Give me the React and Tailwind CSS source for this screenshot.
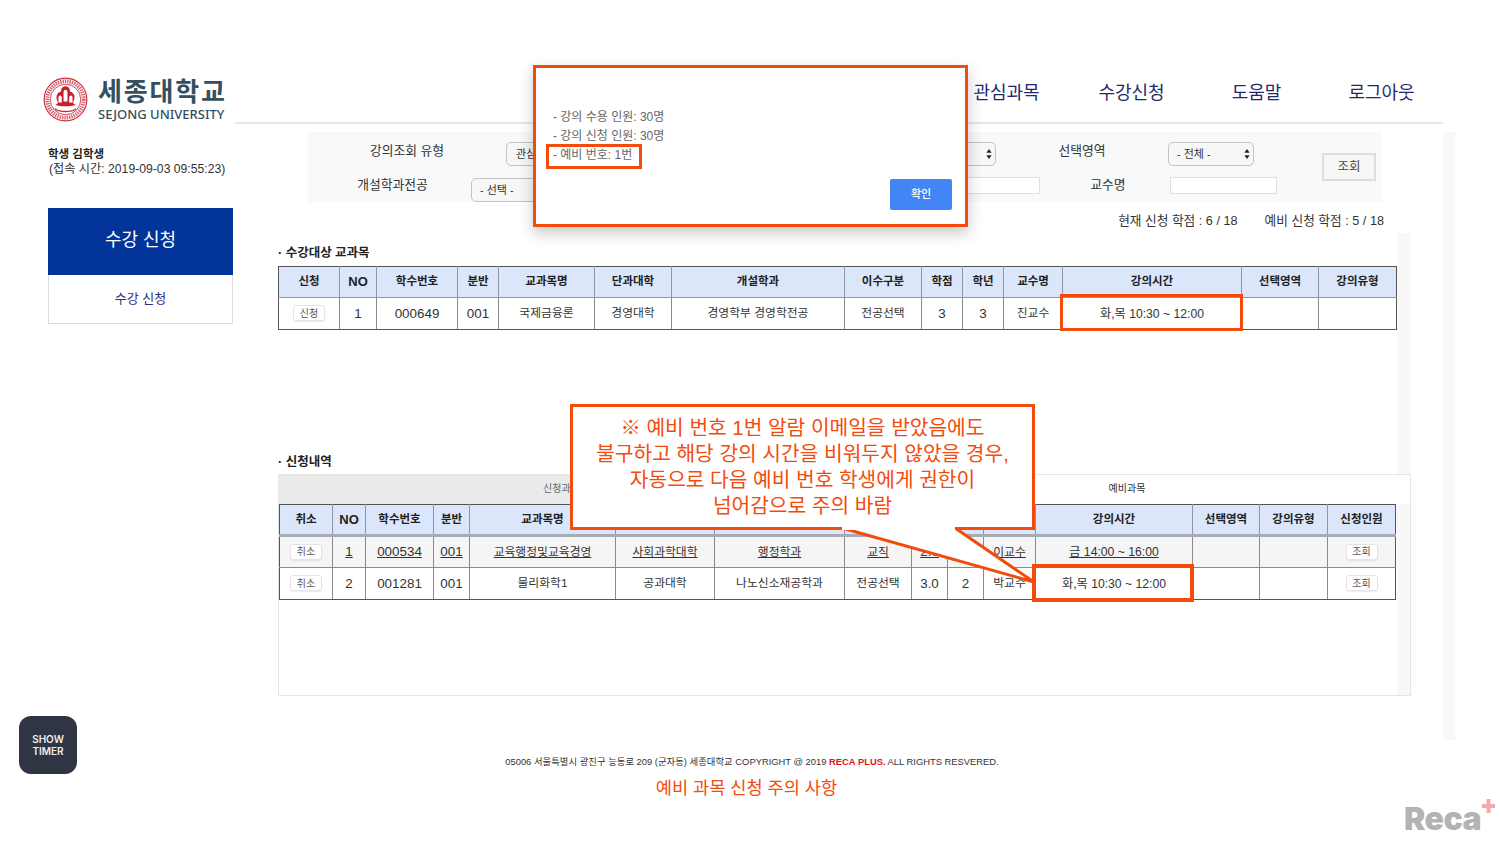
import React from "react";

const upperCols = [61, 37, 81, 41, 96, 77, 173, 77, 41, 41, 59, 179, 77, 78];
const upperHead = ["신청", "NO", "학수번호", "분반", "교과목명", "단과대학", "개설학과", "이수구분", "학점", "학년", "교수명", "강의시간", "선택영역", "강의유형"];
const upperRow = ["1", "000649", "001", "국제금융론", "경영대학", "경영학부 경영학전공", "전공선택", "3", "3", "진교수", "화,목 10:30 ~ 12:00", "", ""];

const lowerCols = [53, 33, 68, 36, 146, 99, 130, 67, 36, 36, 52, 157, 67, 68, 68];
// the middle labels sit behind the callout in the picture, so they stay empty
const lowerHead = ["취소", "NO", "학수번호", "분반", "교과목명", "", "", "", "", "", "", "강의시간", "선택영역", "강의유형", "신청인원"];
const lowerRows = [
  ["1", "000534", "001", "교육행정및교육경영", "사회과학대학", "행정학과", "교직", "2.0", "2", "이교수", "금 14:00 ~ 16:00"],
  ["2", "001281", "001", "물리화학1", "공과대학", "나노신소재공학과", "전공선택", "3.0", "2", "박교수", "화,목 10:30 ~ 12:00"],
];

const tableEdges =
  "[&_tr:last-child_td]:border-b-[#555] [&_th]:border-t-[#555] [&_tr>*:first-child]:border-l-[#555] [&_tr>*:last-child]:border-r-[#555]";

// digits read a little larger than the hangul in these tables
const cellSize = (text) => {
  if (/^[\d.]+$/.test(text)) return "text-[13.4px]";
  if (/\d+:\d+/.test(text)) return "text-[12.2px]";
  return "text-[11.8px]";
};

const SelectArrow = () => (
  <svg width="6" height="10" viewBox="0 0 6 10" className="shrink-0">
    <path d="M3 0L5.6 3.8H.4z M3 10L.4 6.2H5.6z" fill="#222" />
  </svg>
);

const SmallBtn = ({ children }) => (
  <span className="inline-flex align-middle mb-[2px] w-[32px] h-[16px] items-center justify-center rounded-[3px] border border-[#e4e4e4] bg-white text-[10px] text-[#555] shadow-[0_1px_1px_rgba(0,0,0,0.08)]">
    {children}
  </span>
);

const Seal = () => (
  <svg width="45" height="45" viewBox="0 0 46 46" className="shrink-0">
    <circle cx="23" cy="23" r="21.8" fill="#fff" stroke="#c9303c" strokeWidth="1.2" />
    <circle cx="23" cy="23" r="18.6" fill="none" stroke="#d9606a" strokeWidth="4" strokeDasharray="1.4 1" />
    <circle cx="23" cy="23" r="15.6" fill="#fff" stroke="#c9303c" strokeWidth="0.9" />
    <path
      d="M23 9.5c3.2 0 4.6 2.6 4.6 5.2 2.8.6 4.6 3 4.6 6 0 2.2-.6 3.6-1.6 5.2.6 1.6 1.6 2.4 3 2.8-2.6 1-7 1.2-10.6 1.2s-8-.2-10.6-1.2c1.4-.4 2.4-1.2 3-2.8-1-1.6-1.6-3-1.6-5.2 0-3 1.8-5.4 4.6-6 0-2.6 1.4-5.2 4.6-5.2z"
      fill="#c9202f"
    />
    <path d="M23 13c1.3 0 2 1.3 2 3v9h-4v-9c0-1.7.7-3 2-3z" fill="#fff" />
    <path d="M17.4 19c1.2 0 1.8 1 1.8 2.4V26h-3.4v-4.6c0-1.4.5-2.4 1.6-2.4zM28.6 19c1.1 0 1.6 1 1.6 2.4V26h-3.4v-4.6c0-1.4.6-2.4 1.8-2.4z" fill="#fff" />
    <path d="M12 32.5c3 2 7 2.8 11 2.8s8-.8 11-2.8" fill="none" stroke="#c9303c" strokeWidth="1.4" />
  </svg>
);

const Sidebar = () => (
  <aside className="w-[235px] shrink-0 pl-[48px]">
    <div className="flex items-start -ml-[5px] mt-[77px] h-[45px] gap-[10px]">
      <Seal />
      <div className="flex flex-col text-[#34505f]">
        <span className="mt-[1px] text-[26px] leading-[29px] font-semibold tracking-[1.8px] whitespace-nowrap">세종대학교</span>
        <span className="text-[13px] leading-[14px] font-medium whitespace-nowrap font-['Noto_Sans']">SEJONG UNIVERSITY</span>
      </div>
    </div>
    <p className="mt-[25px] text-[11.5px] leading-[15px] font-bold text-[#222]">학생 김학생</p>
    <p className="pl-[1px] text-[12.2px] leading-[15px] text-[#333] whitespace-nowrap">(접속 시간: 2019-09-03 09:55:23)</p>
    <div className="mt-[31px] w-[185px] h-[67px] pb-[2px] bg-[#02349a] text-white text-[18px] flex items-center justify-center">
      수강 신청
    </div>
    <div className="w-[185px] h-[49px] border border-t-0 border-[#dcdcdc] text-[13px] text-[#2b2f7f] flex items-center justify-center">
      수강 신청
    </div>
  </aside>
);

const Header = () => (
  <header className="h-[124px] border-b-2 border-[#e6e6e6] flex justify-end items-start pt-[78px] text-[18px] leading-[30px] text-[#1f2a6b]">
    {["관심과목", "수강신청", "도움말", "로그아웃"].map((item) => (
      <a key={item} className="w-[125px] text-center translate-x-[1px]">{item}</a>
    ))}
  </header>
);

const FilterPanel = () => (
  <div className="ml-[73px] mt-[8px] w-[1074px] h-[70px] bg-[#f8f9fb] flex text-[12.8px] text-[#333]">
    <div className="w-[1014px] shrink-0">
      <div className="flex items-start pt-[10px] h-[46px]">
        <label className="w-[198px] pt-[1px] text-center leading-[16px]">강의조회 유형</label>
        <div className="w-[490px] h-[24px] rounded-[5px] border border-[#c4c4c4] bg-[#f7f7f7] flex items-center justify-between pl-[9px] pr-[3px] text-[11px]">
          관심과목
          <SelectArrow />
        </div>
        <label className="w-[172px] pt-[1px] text-center leading-[16px]">선택영역</label>
        <div className="w-[86px] h-[24px] rounded-[5px] border border-[#c4c4c4] bg-[#f7f7f7] flex items-center justify-between pl-[8px] pr-[3px] text-[11px]">
          - 전체 -
          <SelectArrow />
        </div>
      </div>
      <div className="flex items-start">
        <label className="w-[163px] pl-[6px] -mt-[1px] text-center leading-[16px]">개설학과전공</label>
        <div className="w-[80px] h-[24px] rounded-[5px] border border-[#c4c4c4] bg-[#f7f7f7] flex items-center pl-[8px] text-[11px]">
          - 선택 -
        </div>
        <div className="ml-[289px] -mt-[1px] w-[200px] h-[17px] border border-[#e0e0e0] bg-white" />
        <label className="w-[130px] pl-[6px] -mt-[1px] text-center leading-[16px]">교수명</label>
        <div className="-mt-[1px] w-[107px] h-[17px] border border-[#e0e0e0] bg-white" />
      </div>
    </div>
    <button className="mt-[21px] w-[54px] h-[28px] border-2 border-[#dedede] bg-[#f7f7f7] text-[12.5px] text-[#444]">조회</button>
  </div>
);

const CreditSummary = () => (
  <div className="h-[31px] pr-[59px] pt-[11px] flex justify-end items-start gap-[27px] text-[12.7px] leading-[16px] text-[#333] whitespace-nowrap">
    <span>현재 신청 학점 : 6 / 18</span>
    <span>예비 신청 학점 : 5 / 18</span>
  </div>
);

const HeadCell = ({ label, className }) => (
  <th className={`border-x border-[#8f96a3] text-[11.5px] font-bold text-[#222] ${className}`}>
    {label === "NO" ? <span className="text-[13px]">NO</span> : label}
  </th>
);

const UpperTable = () => (
  <table className={`w-[1118px] table-fixed border-collapse ${tableEdges}`}>
    <colgroup>
      {upperCols.map((w, i) => (
        <col key={i} style={{ width: w }} />
      ))}
    </colgroup>
    <thead>
      <tr className="h-[31px] bg-[#dbe6fb]">
        {upperHead.map((h) => (
          <HeadCell key={h} label={h} className="border-t border-b border-b-[#8f96a3]" />
        ))}
      </tr>
    </thead>
    <tbody>
      <tr className="h-[32px]">
        <td className="border border-[#8a8a8a] text-center">
          <SmallBtn>신청</SmallBtn>
        </td>
        {upperRow.map((c, i) => (
          <td key={i} className={`border border-[#8a8a8a] pt-[1px] text-center text-[#333] ${cellSize(c)}`}>
            {c}
          </td>
        ))}
      </tr>
    </tbody>
  </table>
);

const LowerTable = () => (
  <table className={`w-[1116px] table-fixed border-collapse ${tableEdges}`}>
    <colgroup>
      {lowerCols.map((w, i) => (
        <col key={i} style={{ width: w }} />
      ))}
    </colgroup>
    <thead>
      <tr className="h-[31px] bg-[#dbe6fb]">
        {lowerHead.map((h, i) => (
          <HeadCell key={i} label={h} className="border-t border-b-[3px] border-b-[#a6abb5]" />
        ))}
      </tr>
    </thead>
    <tbody>
      {lowerRows.map((row, r) => (
        <tr key={r} className={r === 0 ? "h-[32px] bg-[#f5f5f5]" : "h-[32px]"}>
          <td className="border border-[#8a8a8a] text-center">
            <SmallBtn>취소</SmallBtn>
          </td>
          {row.map((c, i) => (
            <td
              key={i}
              className={`border border-[#8a8a8a] pt-[1px] text-center text-[#333] ${cellSize(c)} ${r === 0 ? "underline" : ""}`}
            >
              {c}
            </td>
          ))}
          <td className="border border-[#8a8a8a]" />
          <td className="border border-[#8a8a8a]" />
          <td className="border border-[#8a8a8a] text-center">
            <SmallBtn>조회</SmallBtn>
          </td>
        </tr>
      ))}
    </tbody>
  </table>
);

const CourseTables = () => (
  <div className="ml-[43px]">
    <div className="flex h-[241px]">
      <div className="w-[1119px] flex flex-col">
        <h3 className="mt-[12px] h-[21px] text-[12.5px] leading-[16px] font-bold text-[#222]">· 수강대상 교과목</h3>
        <UpperTable />
        <h3 className="mt-auto mb-[4px] text-[12.5px] leading-[16px] font-bold text-[#222]">· 신청내역</h3>
      </div>
      <div className="w-[14px] bg-[#f8f8f8]" />
    </div>
    <div className="w-[1133px] h-[222px] border border-[#e6e6e6] flex flex-col">
      <div className="h-[29px] flex text-[10px]">
        <div className="w-[565px] bg-[#ebebeb] text-[#666] flex items-center justify-center pb-[3px]">신청과목</div>
        <div className="flex-1 bg-white text-[#333] flex items-center justify-center pb-[3px]">예비과목</div>
      </div>
      <div className="flex-1 flex">
        <div className="w-[1118px]">
          <LowerTable />
        </div>
        <div className="flex-1 bg-[#f8f8f8]" />
      </div>
    </div>
  </div>
);

const Footer = () => (
  <footer className="pt-[15px] text-center">
    <p className="ml-[4px] text-[9.4px] leading-[14px] text-[#333]">
      05006 서울특별시 광진구 능동로 209 (군자동) 세종대학교 COPYRIGHT @ 2019{" "}
      <span className="font-bold text-[#e8101a]">RECA PLUS.</span> ALL RIGHTS RESVERED.
    </p>
    <p className="-ml-[7px] mt-[6px] text-[17.6px] leading-[26px] text-[#f24c0c]">예비 과목 신청 주의 사항</p>
  </footer>
);

const Modal = () => (
  <div className="absolute left-[533px] top-[65px] w-[435px] h-[162px] border-[3px] border-[#f24c0c] bg-white shadow-[0_6px_14px_rgba(0,0,0,0.22)] pl-[17px] pt-[40px]">
    <div className="text-[12px] leading-[19px] text-[#666]">
      <p>- 강의 수용 인원: 30명</p>
      <p>- 강의 신청 인원: 30명</p>
      <p>- 예비 번호: 1번</p>
    </div>
    <div className="absolute left-[10px] top-[76px] w-[96px] h-[25px] border-[3px] border-[#f24c0c]" />
    <button className="absolute right-[13px] bottom-[14px] w-[62px] h-[31px] rounded-[2px] bg-[#4285f4] text-[11px] font-medium text-white">확인</button>
  </div>
);

const Callout = () => (
  <>
    <svg className="absolute left-[830px] top-[520px]" width="220" height="85" viewBox="0 0 220 85">
      <polygon points="12,8 125,8 204,62" fill="#fff" />
      <path d="M12 8L204 62L125 8" fill="none" stroke="#f24c0c" strokeWidth="3" />
    </svg>
    <div className="absolute left-[570px] top-[404px] w-[465px] h-[126px] border-[3px] border-[#f24c0c] bg-white text-center text-[20.3px] leading-[26px] text-[#f24c0c] pt-[8px]">
      <p>※ 예비 번호 1번 알람 이메일을 받았음에도</p>
      <p>불구하고 해당 강의 시간을 비워두지 않았을 경우,</p>
      <p>자동으로 다음 예비 번호 학생에게 권한이</p>
      <p>넘어감으로 주의 바람</p>
    </div>
    <div className="absolute left-[842px] top-[525px] w-[113px] h-[5px] bg-white" />
  </>
);

export default function App() {
  return (
    <div className="relative w-[1500px] h-[844px] overflow-hidden bg-white font-['Liberation_Sans','Noto_Sans_CJK_KR',sans-serif]">
      <div className="flex h-[740px]">
        <Sidebar />
        <main className="w-[1208px] shrink-0">
          <Header />
          <FilterPanel />
          <CreditSummary />
          <CourseTables />
        </main>
        <div className="w-[12px] mt-[132px] bg-[#f8f8f8]" />
      </div>
      <Footer />

      {/* overlays */}
      <div className="absolute left-[1060px] top-[294px] w-[183px] h-[37px] border-[3px] border-[#f24c0c]" />
      <div className="absolute left-[1032px] top-[564px] w-[162px] h-[38px] border-[4px] border-[#f24c0c]" />
      <Callout />
      <Modal />

      <button className="absolute left-[19px] top-[716px] w-[58px] h-[58px] rounded-[12px] bg-[#2f3542] text-[10px] leading-[12px] font-semibold text-[#eee] font-['Inter',sans-serif]">
        SHOW
        <br />
        TIMER
      </button>
      <div className="absolute left-[1404px] top-[799px] flex items-start">
        <span className="mt-[1px] text-[32px] leading-[38px] font-black text-[#b3b3b3] font-['Inter',sans-serif] tracking-[-0.5px]">Reca</span>
        <svg width="13" height="14" viewBox="0 0 13 14" className="ml-[1px]">
          <path d="M4.5 0h4v5h4.500v4H8.500v5h-4V9H0V5h4.500z" fill="#f6a9a9" />
        </svg>
      </div>
    </div>
  );
}
